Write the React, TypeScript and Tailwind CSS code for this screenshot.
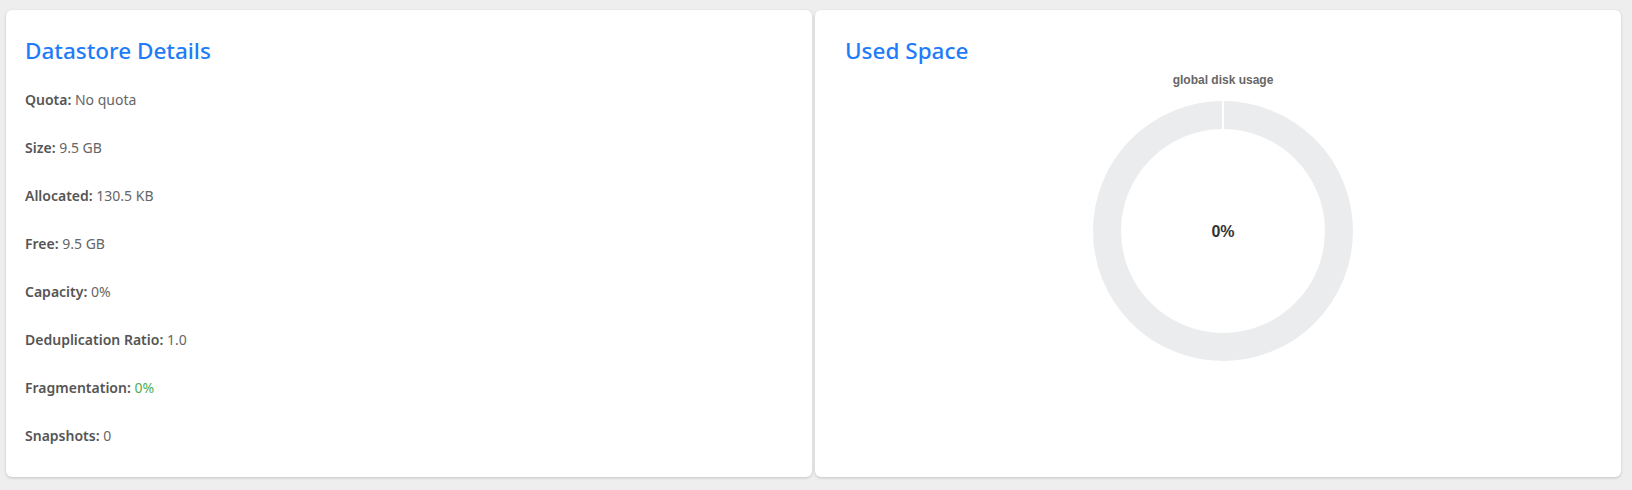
import React from 'react';

const details = [
  { label: 'Quota', value: 'No quota' },
  { label: 'Size', value: '9.5 GB' },
  { label: 'Allocated', value: '130.5 KB' },
  { label: 'Free', value: '9.5 GB' },
  { label: 'Capacity', value: '0%' },
  { label: 'Deduplication Ratio', value: '1.0' },
  { label: 'Fragmentation', value: '0%', ok: true },
  { label: 'Snapshots', value: '0' },
];

const font = { fontFamily: '"Noto Sans", "DejaVu Sans", sans-serif' };

function UsageDonut({ percent }: { percent: number }) {
  return (
    <svg width="262" height="262" viewBox="0 0 262 262">
      <circle cx="131" cy="131" r="116" fill="none" stroke="#ebecee" strokeWidth="28" />
      <line x1="131" y1="1" x2="131" y2="29" stroke="#ffffff" strokeWidth="2" />
      <text
        x="131"
        y="137"
        textAnchor="middle"
        fontFamily='"Liberation Sans", Arial, sans-serif'
        fontWeight="bold"
        fontSize="16"
        fill="#333333"
      >
        {percent}%
      </text>
    </svg>
  );
}

export default function App() {
  return (
    <div className="h-[490px] bg-[#eeeeee] pt-[10px] pl-[6px] pr-[11px] pb-[13px] grid grid-cols-2 gap-[3px]" style={font}>
      {/* Details */}
      <div className="bg-white rounded-md shadow-[0_1px_3px_rgba(0,0,0,0.18)] pl-[19px] pr-5 pt-[27px]">
        <h2 className="text-[22.5px] leading-[28px] font-medium text-[#1f7cf8]">Datastore Details</h2>
        <div className="mt-[25px] flex flex-col gap-[28px] text-[14px] leading-[20px]">
          {details.map((d) => (
            <div key={d.label}>
              <span className="font-semibold text-[#555555]">{d.label}:</span>{' '}
              <span className={d.ok ? 'text-[#4caf50]' : 'text-[#666666]'}>{d.value}</span>
            </div>
          ))}
        </div>
      </div>

      {/* Used space */}
      <div className="bg-white rounded-md shadow-[0_1px_3px_rgba(0,0,0,0.18)] pl-[30px] pr-5 pt-[27px]">
        <h2 className="text-[22.5px] leading-[28px] font-medium text-[#1f7cf8]">Used Space</h2>
        <div className="flex flex-col items-center mt-2">
          <div className="text-[12px] leading-[14px] font-bold text-[#666666]" style={{ fontFamily: '"Liberation Sans", Arial, sans-serif' }}>
            global disk usage
          </div>
          <div className="mt-[13px]">
            <UsageDonut percent={0} />
          </div>
        </div>
      </div>
    </div>
  );
}
